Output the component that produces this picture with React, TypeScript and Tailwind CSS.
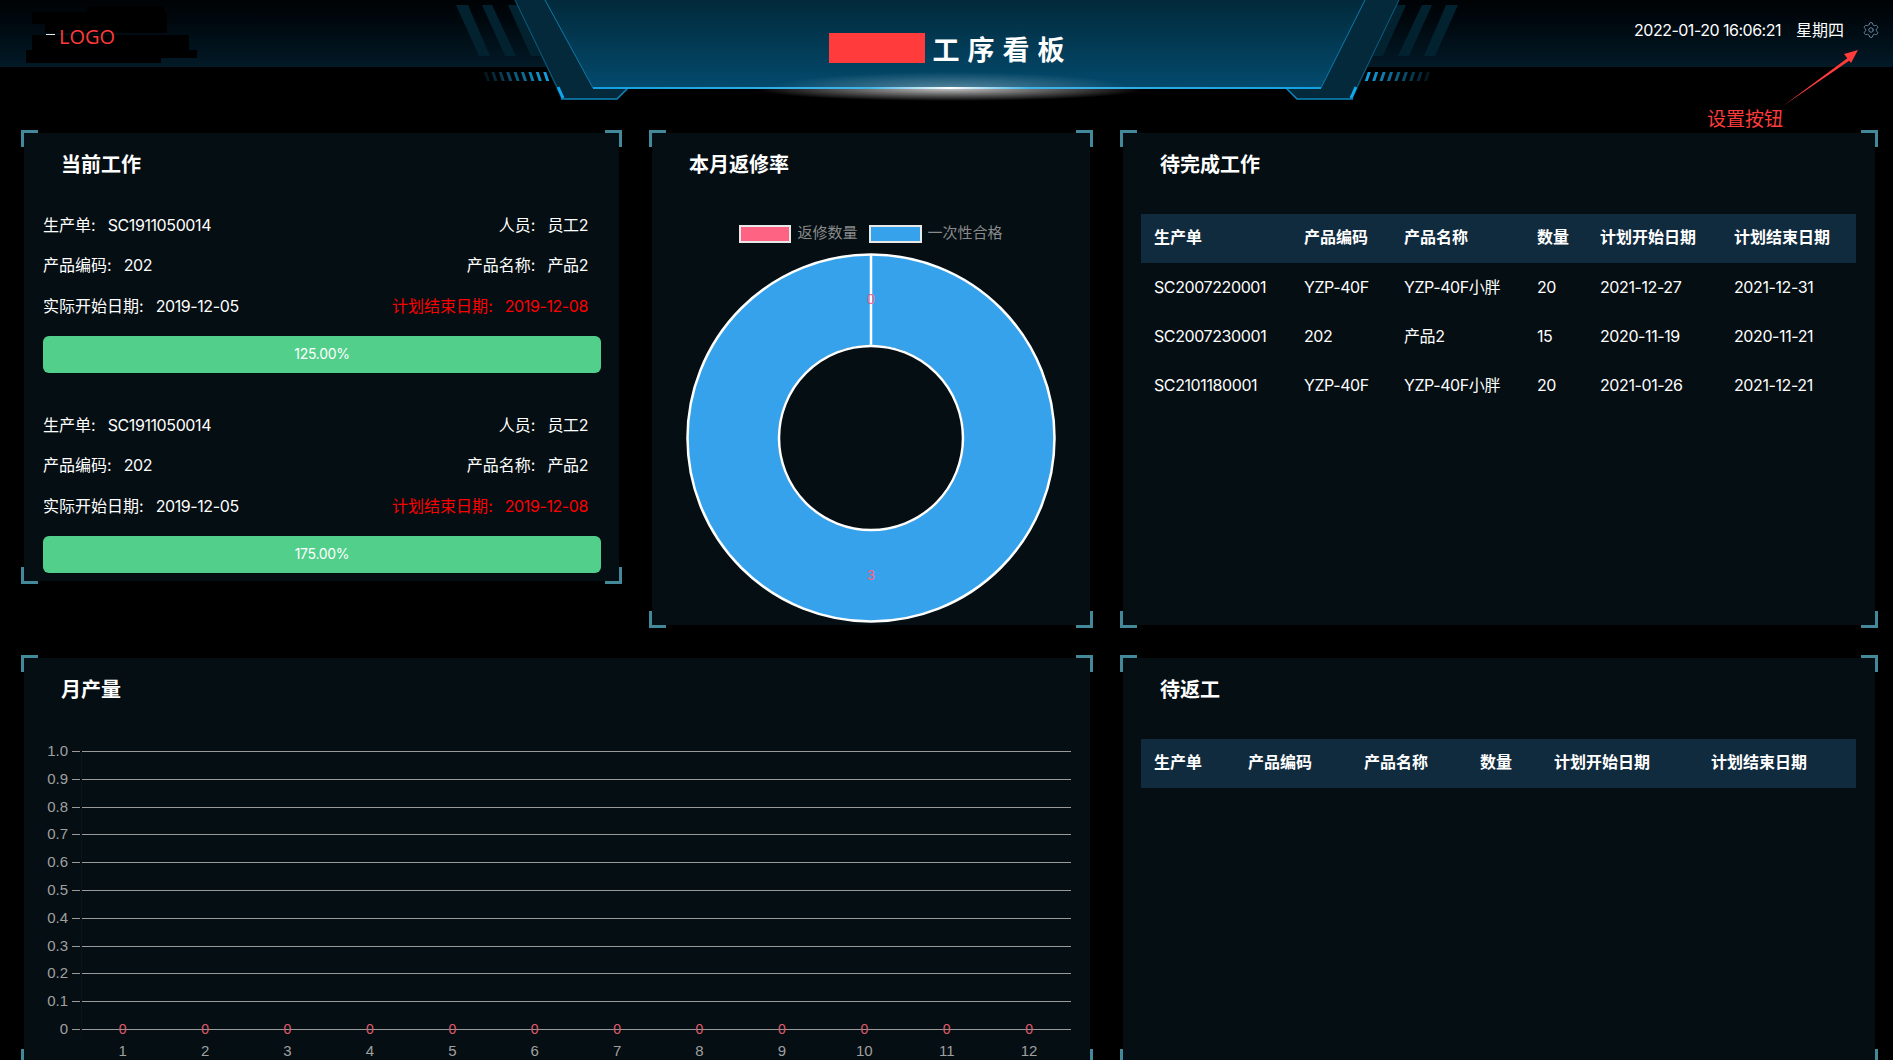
import type { ReactNode } from 'react'
import { Settings } from 'lucide-react'

const todo = [
  ['SC2007220001', 'YZP-40F', 'YZP-40F小胖', '20', '2021-12-27', '2021-12-31'],
  ['SC2007230001', '202', '产品2', '15', '2020-11-19', '2020-11-21'],
  ['SC2101180001', 'YZP-40F', 'YZP-40F小胖', '20', '2021-01-26', '2021-12-21'],
]
const columns = ['生产单', '产品编码', '产品名称', '数量', '计划开始日期', '计划结束日期']
const gridY = [752, 780, 808, 835, 863, 891, 919, 947, 974, 1002, 1030]
const gridLabels = ['1.0', '0.9', '0.8', '0.7', '0.6', '0.5', '0.4', '0.3', '0.2', '0.1', '0']
const months = [1, 2, 3, 4, 5, 6, 7, 8, 9, 10, 11, 12]

function Panel({ title, className, children }: { title: string; className: string; children?: ReactNode }) {
  return (
    <section className={`relative shrink-0 bg-[#040e13] ${className}`}>
      <i className="absolute -left-[3px] -top-[3px] h-[17px] w-[17px] border-l-[3px] border-t-[3px] border-[#44899a]" />
      <i className="absolute -right-[3px] -top-[3px] h-[17px] w-[17px] border-r-[3px] border-t-[3px] border-[#44899a]" />
      <i className="absolute -bottom-[3px] -left-[3px] h-[17px] w-[17px] border-b-[3px] border-l-[3px] border-[#44899a]" />
      <i className="absolute -bottom-[3px] -right-[3px] h-[17px] w-[17px] border-b-[3px] border-r-[3px] border-[#44899a]" />
      <h2 className="h-[62px] pl-[37px] text-[20px] font-bold leading-[64px] text-white">{title}</h2>
      {children}
    </section>
  )
}

function Field({ label, value, red }: { label: string; value: string; red?: boolean }) {
  return (
    <span className={`flex gap-[12px] ${red ? 'text-[#ff0000]' : 'text-white'}`}>
      <span>{label}:</span>
      <span className="tracking-[-0.4px]">{value}</span>
    </span>
  )
}

function Job({ percent, last }: { percent: string; last?: boolean }) {
  return (
    <div className={last ? '' : 'mb-[32px]'}>
      <div className="flex h-[40px] items-center justify-between pr-[13px]">
        <Field label="生产单" value="SC1911050014" />
        <Field label="人员" value="员工2" />
      </div>
      <div className="flex h-[40px] items-center justify-between pr-[13px]">
        <Field label="产品编码" value="202" />
        <Field label="产品名称" value="产品2" />
      </div>
      <div className="mt-[1px] flex h-[40px] items-center justify-between pr-[13px]">
        <Field label="实际开始日期" value="2019-12-05" />
        <Field label="计划结束日期" value="2019-12-08" red />
      </div>
      <div className="mt-[10px] flex h-[37px] items-center justify-center rounded-[6px] bg-[#52cf8b] pb-[2px] text-[14px] tracking-[-0.3px] text-white">
        {percent}
      </div>
    </div>
  )
}

function Table({ widths, rows }: { widths: string[]; rows: string[][] }) {
  return (
    <table className="w-full table-fixed border-collapse text-[16px] text-white">
      <colgroup>
        {widths.map((w, i) => (
          <col key={i} className={w} />
        ))}
      </colgroup>
      <thead>
        <tr className="h-[49px] bg-[#102a3e]">
          {columns.map(c => (
            <th key={c} className="pb-[4px] pl-[13px] text-left font-bold">{c}</th>
          ))}
        </tr>
      </thead>
      <tbody>
        {rows.map(r => (
          <tr key={r[0]} className="h-[49px]">
            {r.map((cell, i) => (
              <td key={i} className="whitespace-nowrap pb-[2px] pl-[13px] tracking-[-0.4px]">{cell}</td>
            ))}
          </tr>
        ))}
      </tbody>
    </table>
  )
}

function Donut() {
  return (
    <svg viewBox="0 0 372 372" className="mx-auto mt-[9px] block h-[372px] w-[372px]">
      <circle cx="186" cy="186" r="138" fill="none" stroke="#36a2eb" strokeWidth="90" />
      <circle cx="186" cy="186" r="183.5" fill="none" stroke="#fff" strokeWidth="2.5" />
      <circle cx="186" cy="186" r="92" fill="none" stroke="#fff" strokeWidth="2.5" />
      <line x1="186" y1="3" x2="186" y2="94" stroke="#fff" strokeWidth="2.5" />
      <text x="186" y="52" textAnchor="middle" fontSize="14" fill="#ff6384" fontFamily="Liberation Sans">0</text>
      <text x="186" y="328" textAnchor="middle" fontSize="14" fill="#ff6384" fontFamily="Liberation Sans">3</text>
    </svg>
  )
}

function MonthChart() {
  return (
    <svg viewBox="0 0 1066 343" className="block h-[343px] w-[1066px]" fontFamily="Liberation Sans">
      <line x1="57.5" y1="30" x2="57.5" y2="318" stroke="#0a1318" />
      {gridY.map((y, i) => (
        <g key={y}>
          <line x1="48" y1={y - 720 + 0.5 - 1} x2="56" y2={y - 720 + 0.5 - 1} stroke="#9a9a9a" />
          <line x1="58" y1={y - 720 + 0.5 - 1} x2="1047" y2={y - 720 + 0.5 - 1} stroke="#9a9a9a" />
          <text x="44" y={y - 720 + 4} textAnchor="end" fontSize="15" fill="#a0a0a0">{gridLabels[i]}</text>
        </g>
      ))}
      {months.map((m, i) => (
        <g key={m}>
          <text x={98.7 + i * 82.4} y="314" textAnchor="middle" fontSize="14" fill="#e05a6a">0</text>
          <text x={98.7 + i * 82.4} y="336" textAnchor="middle" fontSize="15" fill="#a0a0a0">{m}</text>
        </g>
      ))}
    </svg>
  )
}

function HeaderArt() {
  const side = (
    <>
      <polygon points="456,5 468,5 490,56 479,56" fill="#03222f" />
      <polygon points="482,5 492,5 516,56 505,56" fill="#03222f" />
      <polygon points="508,5 518,5 542,56 531,56" fill="#03222f" />
      {[0, 1, 2, 3, 4, 5, 6, 7, 8].map(i => (
        <polygon
          key={i}
          points={`${484 + i * 7.4},72 ${487 + i * 7.4},72 ${490 + i * 7.4},81 ${487 + i * 7.4},81`}
          fill="#12a8ea"
          opacity={0.15 + i * 0.1}
        />
      ))}
    </>
  )
  return (
    <svg viewBox="0 0 1893 105" className="absolute left-0 top-0 h-[105px] w-[1893px]">
      <defs>
        <linearGradient id="inner" x1="0" y1="0" x2="0" y2="1">
          <stop offset="0" stopColor="#022a3b" />
          <stop offset="1" stopColor="#034a6d" />
        </linearGradient>
        <linearGradient id="edge" x1="0" y1="0" x2="1" y2="0">
          <stop offset="0" stopColor="#12a0e0" />
          <stop offset="0.38" stopColor="#3fb4e8" />
          <stop offset="0.49" stopColor="#ffffff" />
          <stop offset="0.6" stopColor="#3fb4e8" />
          <stop offset="1" stopColor="#12a0e0" />
        </linearGradient>
        <radialGradient id="glowUp">
          <stop offset="0" stopColor="#fff" stopOpacity="0.32" />
          <stop offset="1" stopColor="#fff" stopOpacity="0" />
        </radialGradient>
        <radialGradient id="glowDown">
          <stop offset="0" stopColor="#fff" stopOpacity="0.75" />
          <stop offset="1" stopColor="#fff" stopOpacity="0" />
        </radialGradient>
        <clipPath id="above"><rect x="0" y="0" width="1893" height="88" /></clipPath>
        <clipPath id="below"><rect x="0" y="89" width="1893" height="12" /></clipPath>
      </defs>
      {side}
      <g transform="translate(1914 0) scale(-1 1)">{side}</g>
      <polygon points="515,0 1399,0 1358,88 1353,99 1297,99 1286,88 628,88 617,99 561,99 556,88" fill="#03293b" />
      <polygon points="545,0 1365,0 1321,88 593,88" fill="url(#inner)" />
      <polyline points="545,0 593,88" fill="none" stroke="#0d7aa8" />
      <polyline points="1365,0 1321,88" fill="none" stroke="#0d7aa8" />
      <line x1="515" y1="0" x2="557" y2="87" stroke="#0b5f85" />
      <line x1="1399" y1="0" x2="1357" y2="87" stroke="#0b5f85" />
      <polyline points="561,99 617,99 628,88" fill="none" stroke="#0f86bd" strokeWidth="1.5" />
      <polyline points="1353,99 1297,99 1286,88" fill="none" stroke="#0f86bd" strokeWidth="1.5" />
      <line x1="558" y1="87" x2="563" y2="98" stroke="#10aaf0" strokeWidth="3" />
      <line x1="1356" y1="87" x2="1351" y2="98" stroke="#10aaf0" strokeWidth="3" />
      <ellipse cx="950" cy="88" rx="180" ry="16" fill="url(#glowUp)" clipPath="url(#above)" />
      <ellipse cx="950" cy="89" rx="195" ry="12" fill="url(#glowDown)" clipPath="url(#below)" />
      <rect x="593" y="87" width="728" height="2" fill="url(#edge)" />
    </svg>
  )
}

function LogoArt() {
  return (
    <svg viewBox="0 0 200 66" className="absolute left-0 top-0 h-[66px] w-[200px]">
      <rect x="87" y="6" width="78" height="9" />
      <rect x="32" y="12" width="135" height="12" />
      <rect x="45" y="24" width="122" height="9" />
      <rect x="32" y="35" width="157" height="15" />
      <rect x="26" y="50" width="171" height="8" />
      <rect x="26" y="58" width="135" height="5" />
      <rect x="46" y="34" width="9" height="1" fill="#e8e8e8" />
    </svg>
  )
}

export default function App() {
  return (
    <div className="relative h-[1060px] w-[1893px] overflow-hidden bg-black text-[16px] [font-family:Inter,'Noto_Sans_CJK_SC',sans-serif]">
      <header className="relative flex h-[67px] items-center justify-between bg-gradient-to-b from-[#000305] to-[#021a27]">
        <HeaderArt />
        <LogoArt />
        <span className="relative ml-[59px] mt-[7px] text-[20px] text-[#ff3b3b] [font-family:'Open_Sans',sans-serif]">LOGO</span>
        <div className="absolute inset-x-0 top-[33px] flex items-start justify-center pl-[8px]">
          <span className="h-[30px] w-[96px] bg-[#ff3b3b]" />
          <span className="ml-[8px] mt-[3px] text-[27px] font-bold leading-[30px] tracking-[8px] text-white">工序看板</span>
        </div>
        <div className="relative mb-[7px] mr-[13px] flex items-center text-white">
          <span className="tracking-[-0.5px]">2022-01-20 16:06:21</span>
          <span className="ml-[15px]">星期四</span>
          <Settings className="ml-[18px] text-[#6f8aa5]" size={18} strokeWidth={1.25} />
        </div>
      </header>

      <svg viewBox="0 0 100 70" className="absolute left-[1770px] top-[45px] h-[70px] w-[100px]">
        <polygon points="13,61 79,12 81,14.5" fill="#ff3b3b" />
        <polygon points="88,5 74,9 81,18" fill="#ff3b3b" />
      </svg>
      <span className="absolute left-[1707px] top-[108px] text-[19px] leading-[24px] text-[#ff3b3b]">设置按钮</span>

      <main className="pl-[24px] pt-[66px]">
        <div className="flex items-start gap-[33px]">
          <Panel title="当前工作" className="h-[448px] w-[595px]">
            <div className="pl-[19px] pr-[18px] pt-[10px]">
              <Job percent="125.00%" />
              <Job percent="175.00%" last />
            </div>
          </Panel>
          <Panel title="本月返修率" className="h-[492px] w-[438px]">
            <div className="mt-[30px] flex h-[18px] items-center justify-center text-[15px] text-[#8a8a8a] [font-family:'Liberation_Sans','Noto_Sans_CJK_SC',sans-serif]">
              <i className="h-[18px] w-[52px] border-2 border-[#e8e8e8] bg-[#ff6384]" />
              <span className="mb-[2px] ml-[6px]">返修数量</span>
              <i className="ml-[11px] h-[18px] w-[53px] border-2 border-[#e8e8e8] bg-[#36a2eb]" />
              <span className="mb-[2px] ml-[6px]">一次性合格</span>
            </div>
            <Donut />
          </Panel>
          <Panel title="待完成工作" className="h-[492px] w-[752px]">
            <div className="pl-[18px] pr-[19px] pt-[19px]">
              <Table widths={['w-[150px]', 'w-[100px]', 'w-[133px]', 'w-[63px]', 'w-[134px]', 'w-[135px]']} rows={todo} />
            </div>
          </Panel>
        </div>
        <div className="mt-[33px] flex items-start gap-[33px]">
          <Panel title="月产量" className="h-[405px] w-[1066px]">
            <MonthChart />
          </Panel>
          <Panel title="待返工" className="h-[405px] w-[752px]">
            <div className="pl-[18px] pr-[19px] pt-[19px]">
              <Table widths={['w-[94px]', 'w-[116px]', 'w-[116px]', 'w-[74px]', 'w-[157px]', 'w-[158px]']} rows={[]} />
            </div>
          </Panel>
        </div>
      </main>
    </div>
  )
}
